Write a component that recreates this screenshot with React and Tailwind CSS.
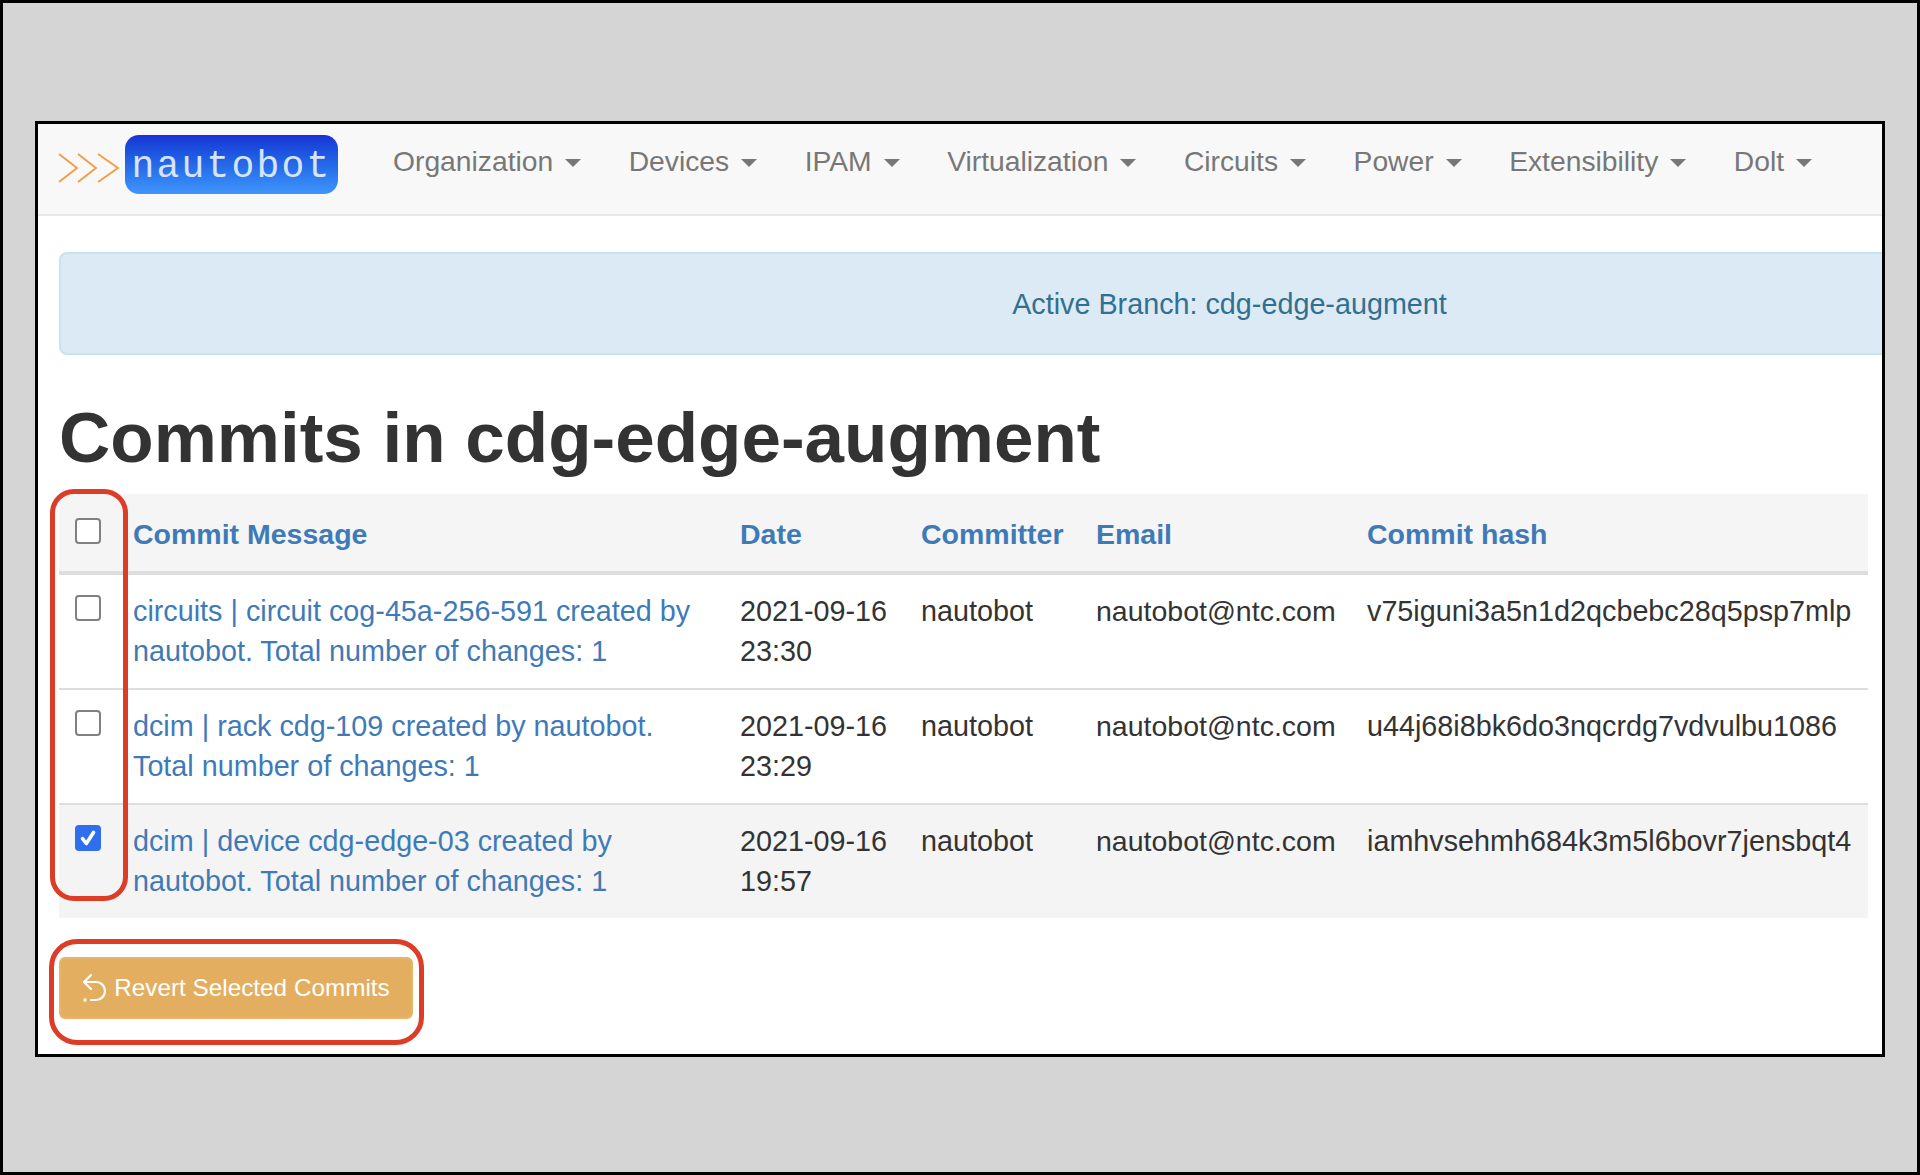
const navItems = ["Organization", "Devices", "IPAM", "Virtualization", "Circuits", "Power", "Extensibility", "Dolt"];

const commits = [
  {
    message: "circuits | circuit cog-45a-256-591 created by nautobot. Total number of changes: 1",
    date: "2021-09-16 23:30",
    hash: "v75iguni3a5n1d2qcbebc28q5psp7mlp",
    checked: false,
  },
  {
    message: "dcim | rack cdg-109 created by nautobot. Total number of changes: 1",
    date: "2021-09-16 23:29",
    hash: "u44j68i8bk6do3nqcrdg7vdvulbu1086",
    checked: false,
  },
  {
    message: "dcim | device cdg-edge-03 created by nautobot. Total number of changes: 1",
    date: "2021-09-16 19:57",
    hash: "iamhvsehmh684k3m5l6bovr7jensbqt4",
    checked: true,
  },
];

function Checkbox({ checked }) {
  if (checked) {
    return (
      <span className="flex h-[26px] w-[26px] items-center justify-center rounded-[4px] bg-[#2f6fed]">
        <svg viewBox="0 0 16 16" className="h-[22px] w-[22px]" fill="none" stroke="white" strokeWidth="2.6" strokeLinecap="round" strokeLinejoin="round">
          <path d="M4 8.5l2.8 3.5L12 4" />
        </svg>
      </span>
    );
  }
  return <span className="block h-[26px] w-[26px] rounded-[4px] border-2 border-[#808080] bg-white" />;
}

export default function App() {
  return (
    <div className="relative h-[1175px] w-[1920px] overflow-hidden border-[3px] border-black bg-[#d5d5d5] font-['Liberation_Sans',Arial,sans-serif] text-[28px] leading-[40px] text-[#333]">
      <div className="ml-[32px] mt-[118px] h-[936px] w-[1850px] overflow-hidden border-[3px] border-black bg-white">
        {/* navbar */}
        <div className="flex h-[92px] border-b-2 border-[#e7e7e7] bg-[#f8f8f8]">
          <div className="ml-[20px] mt-[11px] flex h-[59px] items-start">
            <svg viewBox="0 0 62 32" className="mt-[17px] h-[32px] w-[62px]" fill="none" stroke="#f59a42" strokeWidth="1.8">
              <path d="M1 2l18 14L1 30M20 2l18 14-18 14M40 2l20 14-20 14" />
            </svg>
            <div className="ml-[5px] flex h-[59px] w-[213px] items-center justify-center rounded-[14px] bg-gradient-to-b from-[#1a32d4] to-[#4096fb] pt-1 font-['Liberation_Mono',monospace] text-[38px] tracking-[2.2px] text-[#d6e4fa]">
              nautobot
            </div>
          </div>
          <nav className="ml-[55px] flex gap-[47.5px] pt-[17px] text-[28.25px] text-[#777]">
            {navItems.map((item) => (
              <div key={item} className="flex h-[40px] items-center gap-[12px]">
                <span>{item}</span>
                <span className="mt-1 h-0 w-0 border-x-[8px] border-t-[8px] border-x-transparent border-t-[#777]" />
              </div>
            ))}
          </nav>
        </div>

        {/* content */}
        <div className="pl-[21px] text-[28.75px]">
          <div className="mt-[36px] flex h-[103px] items-center justify-center rounded-l-[8px] border-y-2 border-l-2 border-[#c5e5ee] bg-[#dceaf5] pl-[516px] text-[#31708f]">
            Active Branch: cdg-edge-augment
          </div>

          <h1 className="mt-[43px] text-[71px] font-bold leading-[79px] text-[#333]">Commits in cdg-edge-augment</h1>

          <table className="mt-[17px] w-[1809px] table-fixed border-collapse">
            <colgroup>
              <col className="w-[58px]" />
              <col className="w-[607px]" />
              <col className="w-[181px]" />
              <col className="w-[175px]" />
              <col className="w-[271px]" />
              <col className="w-[517px]" />
            </colgroup>
            <thead>
              <tr className="h-[79px] border-b-4 border-[#ddd] bg-[#f5f5f5] text-left text-[28.5px] font-bold text-[#3f7ab8]">
                <th className="pb-[3px] pl-[16px]">
                  <Checkbox />
                </th>
                <th className="px-[16px] pt-[2px]">Commit Message</th>
                <th className="px-[16px] pt-[2px]">Date</th>
                <th className="px-[16px] pt-[2px]">Committer</th>
                <th className="px-[16px] pt-[2px]">Email</th>
                <th className="px-[16px] pt-[2px]">Commit hash</th>
              </tr>
            </thead>
            <tbody>
              {commits.map((commit, i) => (
                <tr key={commit.hash} className={`align-top ${i === 2 ? "bg-[#f4f4f4]" : ""} ${i > 0 ? "border-t-2 border-[#ddd]" : ""}`}>
                  <td className="pl-[16px] pt-[20px]">
                    <Checkbox checked={commit.checked} />
                  </td>
                  <td className="px-[16px] pb-[17px] pt-[16px] text-[#3f7ab8]">{commit.message}</td>
                  <td className="px-[16px] pb-[17px] pt-[16px]">{commit.date}</td>
                  <td className="px-[16px] pb-[17px] pt-[16px]">nautobot</td>
                  <td className="whitespace-nowrap px-[16px] pb-[17px] pt-[16px] text-[28.5px]">nautobot@ntc.com</td>
                  <td className="whitespace-nowrap px-[16px] pb-[17px] pt-[16px]">{commit.hash}</td>
                </tr>
              ))}
            </tbody>
          </table>

          <button className="mt-[39px] flex h-[62px] w-[354px] items-center justify-center gap-[6px] rounded-[6px] border-2 border-[#e8b468] bg-[#e4ae60] text-[24.3px] text-white">
            <svg viewBox="0 0 26 30" className="h-[30px] w-[26px]" fill="none" stroke="white" strokeWidth="2.2" strokeLinecap="round" strokeLinejoin="round">
              <path d="M9 2L2 9l7 7" />
              <path d="M2 9h12a9 9 0 0 1 0 18H9" />
              <circle cx="3" cy="27" r="0.6" fill="white" />
            </svg>
            Revert Selected Commits
          </button>
        </div>
      </div>

      {/* red annotation outlines */}
      <div className="absolute left-[47px] top-[486px] h-[412px] w-[78px] rounded-[24px] border-[5px] border-[#dd3c27]" />
      <div className="absolute left-[46px] top-[936px] h-[106px] w-[375px] rounded-[28px] border-[5px] border-[#dd3c27]" />
    </div>
  );
}
